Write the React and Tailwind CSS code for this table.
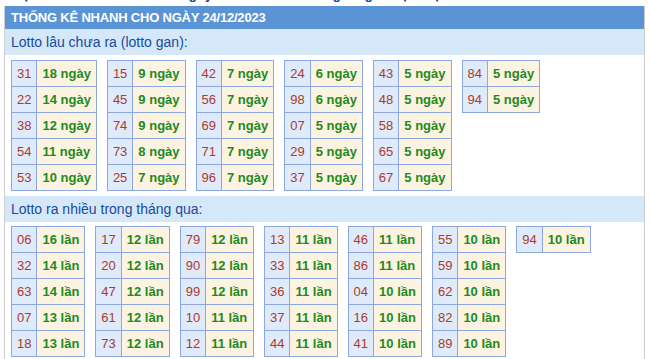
import React from "react";

const gan = [
  [["31", "18 ngày"], ["22", "14 ngày"], ["38", "12 ngày"], ["54", "11 ngày"], ["53", "10 ngày"]],
  [["15", "9 ngày"], ["45", "9 ngày"], ["74", "9 ngày"], ["73", "8 ngày"], ["25", "7 ngày"]],
  [["42", "7 ngày"], ["56", "7 ngày"], ["69", "7 ngày"], ["71", "7 ngày"], ["96", "7 ngày"]],
  [["24", "6 ngày"], ["98", "6 ngày"], ["07", "5 ngày"], ["29", "5 ngày"], ["37", "5 ngày"]],
  [["43", "5 ngày"], ["48", "5 ngày"], ["58", "5 ngày"], ["65", "5 ngày"], ["67", "5 ngày"]],
  [["84", "5 ngày"], ["94", "5 ngày"]],
];

const nhieu = [
  [["06", "16 lần"], ["32", "14 lần"], ["63", "14 lần"], ["07", "13 lần"], ["18", "13 lần"]],
  [["17", "12 lần"], ["20", "12 lần"], ["47", "12 lần"], ["61", "12 lần"], ["73", "12 lần"]],
  [["79", "12 lần"], ["90", "12 lần"], ["99", "12 lần"], ["10", "11 lần"], ["12", "11 lần"]],
  [["13", "11 lần"], ["33", "11 lần"], ["36", "11 lần"], ["37", "11 lần"], ["44", "11 lần"]],
  [["46", "11 lần"], ["86", "11 lần"], ["04", "10 lần"], ["16", "10 lần"], ["41", "10 lần"]],
  [["55", "10 lần"], ["59", "10 lần"], ["62", "10 lần"], ["82", "10 lần"], ["89", "10 lần"]],
  [["94", "10 lần"]],
];

function Block({ rows }) {
  return (
    <div className="grid grid-cols-[auto_auto] self-start border-l border-t border-[#8da8de]">
      {rows.map(([n, v], i) => (
        <React.Fragment key={i}>
          <div className="h-[26px] flex items-center px-[5px] border-r border-b border-[#8da8de] bg-[#dfeafb] text-[#ad3b28] text-[13px]">
            {n}
          </div>
          <div className="h-[26px] flex items-center px-[5px] border-r border-b border-[#8da8de] bg-[#fdf3e1] text-[#1e8a1e] text-[13px] font-bold">
            {v}
          </div>
        </React.Fragment>
      ))}
    </div>
  );
}

export default function App() {
  return (
    <div className="w-[650px] h-[359px] overflow-hidden bg-white" style={{ fontFamily: '"Liberation Sans", Arial, sans-serif' }}>
      <div className="h-[6px] overflow-hidden pl-[12px]">
        <div className="-mt-[14px] text-[14px] leading-[16px] font-bold text-[#1a4a9a]">
          Dự đoán xổ số miền Bắc ngày 24/12/2023 – thống kê giải đặc biệt
        </div>
      </div>
      <div className="ml-[4px] w-[641px] h-[353px] border-l border-r border-[#cfcfcf]">
        <div className="h-[23px] bg-[#5b94d4] flex items-center pl-[6px] text-white text-[13px] font-bold tracking-[-0.2px]">
          THỐNG KÊ NHANH CHO NGÀY 24/12/2023
        </div>
        <div className="h-[26px] bg-[#d5e8fa] flex items-center pl-[6px] text-[#1a4a9a] text-[14px]">
          Lotto lâu chưa ra (lotto gan):
        </div>
        <div className="flex gap-[10px] pl-[6px] pt-[5px]">
          {gan.map((rows, i) => (
            <Block key={i} rows={rows} />
          ))}
        </div>
        <div className="h-[26px] mt-[5px] bg-[#d5e8fa] flex items-center pl-[6px] text-[#1a4a9a] text-[14px]">
          Lotto ra nhiều trong tháng qua:
        </div>
        <div className="flex gap-[10px] pl-[6px] pt-[4px]">
          {nhieu.map((rows, i) => (
            <Block key={i} rows={rows} />
          ))}
        </div>
      </div>
    </div>
  );
}
